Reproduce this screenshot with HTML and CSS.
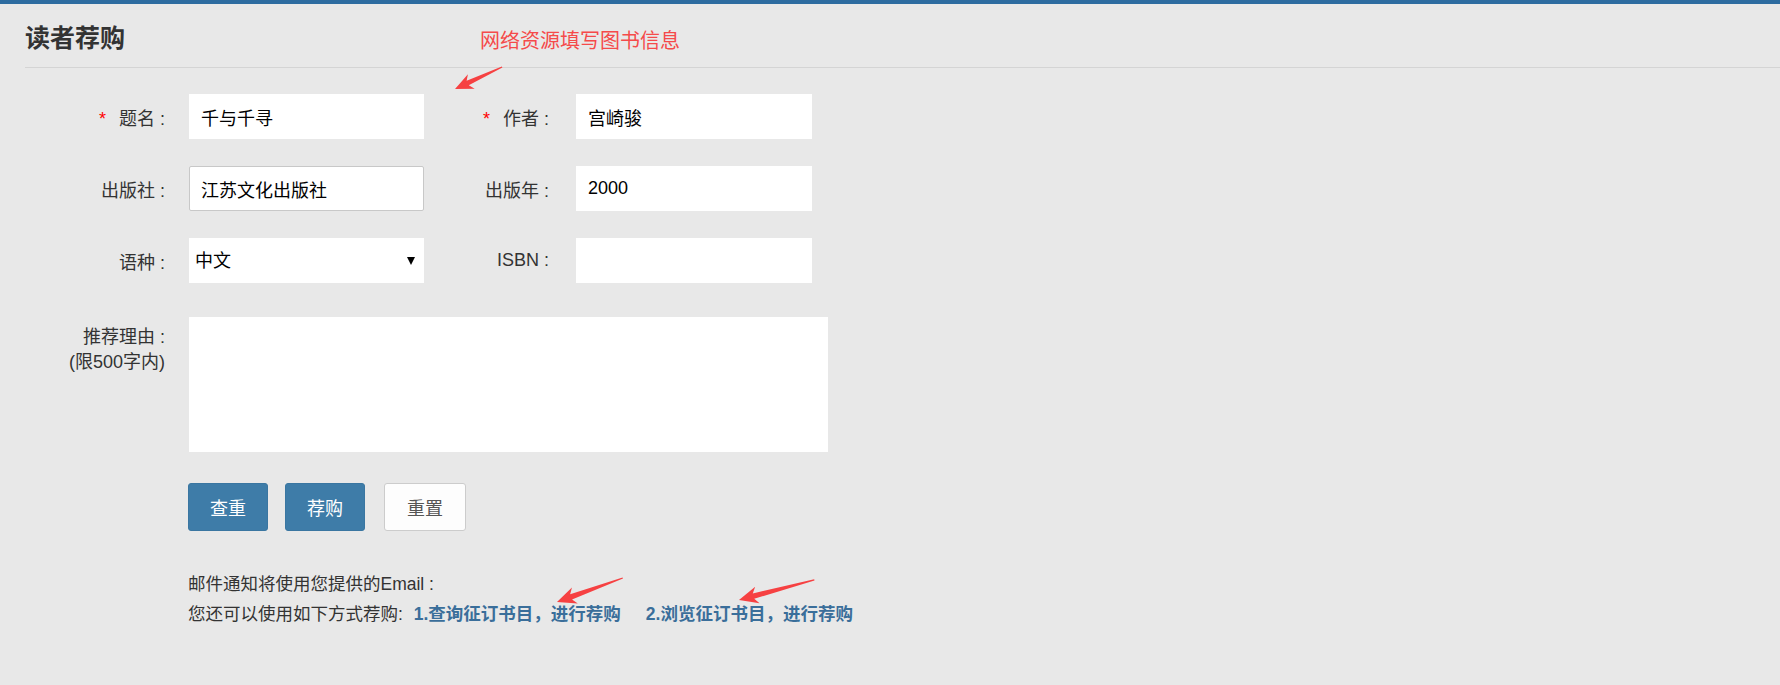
FILE: index.html
```html
<!DOCTYPE html>
<html lang="zh-CN">
<head>
    <meta charset="UTF-8">
    <title>读者荐购</title>
    <link rel="stylesheet" href="styles.css">
</head>
<body>
    <div class="topbar"></div>
    <div class="page">
        <div class="header">
            <h2>读者荐购</h2>
        </div>

        <form class="form">
            <div class="row">
                <label class="label"><span class="req">*</span>题名 :</label>
                <input class="field" type="text" value="千与千寻">
                <label class="label label-2"><span class="req">*</span>作者 :</label>
                <input class="field field-2" type="text" value="宫崎骏">
            </div>
            <div class="row">
                <label class="label">出版社 :</label>
                <input class="field focused" type="text" value="江苏文化出版社">
                <label class="label label-2">出版年 :</label>
                <input class="field field-2" type="text" value="2000">
            </div>
            <div class="row">
                <label class="label">语种 :</label>
                <div class="select-wrap">
                    <select class="field select">
                        <option>中文</option>
                        <option>英文</option>
                        <option>其他</option>
                    </select>
                </div>
                <label class="label label-2">ISBN :</label>
                <input class="field field-2" type="text">
            </div>
            <div class="row row-reason">
                <label class="label">推荐理由 :<br>(限500字内)</label>
                <textarea class="reason"></textarea>
            </div>
            <div class="buttons">
                <button type="button" class="btn btn-blue">查重</button>
                <button type="button" class="btn btn-blue">荐购</button>
                <button type="reset" class="btn btn-plain">重置</button>
            </div>
        </form>

        <div class="notes">
            <p>邮件通知将使用您提供的Email :</p>
            <p>您还可以使用如下方式荐购: <a href="#" class="link">1.查询征订书目，进行荐购</a><a href="#" class="link link-2">2.浏览征订书目，进行荐购</a></p>
        </div>
    </div>

    <!-- annotations drawn over the page -->
    <span class="note-text">网络资源填写图书信息</span>
    <svg class="arrows" width="1780" height="685" viewBox="0 0 1780 685">
        <g fill="#f64142">
            <polygon transform="translate(455 89) rotate(-25)" points="0,0 18,-8 14,-2.5 52,-0.6 52,0.6 14,2.5 18,8"/>
            <polygon transform="translate(557 602) rotate(-20)" points="0,0 19,-8.5 15,-2.8 70,-0.6 70,0.6 15,2.8 19,8.5"/>
            <polygon transform="translate(739 600) rotate(-15)" points="0,0 19,-8.5 15,-2.8 78,-0.6 78,0.6 15,2.8 19,8.5"/>
        </g>
    </svg>
</body>
</html>
```

FILE: styles.css
```css
body {
    margin: 0;
    background-color: #e8e8e8;
    font-family: "Liberation Sans", "Noto Sans CJK SC", sans-serif;
    color: #333;
    height: 685px;
    position: relative;
    overflow: hidden;
}
.topbar {
    height: 4px;
    background-color: #2d6ca0;
}
.page {
    padding-left: 25px;
}
.header {
    height: 63px;
    display: flex;
    align-items: center;
    border-bottom: 1px solid #d4d4d4;
}
.header h2 {
    margin: 0;
    font-size: 25px;
    font-weight: bold;
    color: #333;
}
.form {
    padding-top: 26px;
}
.row {
    display: flex;
    align-items: center;
    margin-bottom: 27px;
}
.label {
    width: 140px;
    margin-right: 24px;
    text-align: right;
    font-size: 18px;
    color: #333;
}
.label-2 {
    width: 125px;
    margin-right: 27px;
}
.req {
    color: #f00;
    margin-right: 13px;
}
.field {
    box-sizing: border-box;
    width: 235px;
    height: 45px;
    padding: 0 11px;
    border: 1px solid #fff;
    background-color: #fff;
    font-family: "Liberation Sans", "Noto Sans CJK SC", sans-serif;
    font-size: 18px;
    color: #000;
    outline: none;
}
.field-2 {
    width: 236px;
}
.focused {
    border-color: #c8c8c8;
    border-radius: 2px;
}
.select-wrap {
    position: relative;
}
.select {
    appearance: none;
    -webkit-appearance: none;
    padding: 0 5px;
    border-radius: 0;
}
.select-wrap::after {
    content: "";
    position: absolute;
    right: 9px;
    top: 19px;
    border-left: 4px solid transparent;
    border-right: 4px solid transparent;
    border-top: 8px solid #000;
    pointer-events: none;
}
.row-reason {
    align-items: flex-start;
    margin-top: 34px;
    margin-bottom: 0;
}
.row-reason .label {
    padding-top: 8px;
    line-height: 25px;
}
.reason {
    box-sizing: border-box;
    width: 639px;
    height: 135px;
    border: none;
    background-color: #fff;
    resize: none;
    outline: none;
}
.buttons {
    display: flex;
    gap: 17px;
    margin-top: 31px;
    padding-left: 163px;
}
.btn {
    height: 48px;
    width: 80px;
    border-radius: 3px;
    font-family: "Liberation Sans", "Noto Sans CJK SC", sans-serif;
    font-size: 18px;
    cursor: pointer;
}
.btn-blue {
    background-color: #3e7ca8;
    border: 1px solid #3a76a1;
    color: #fff;
}
.btn-plain {
    width: 82px;
    margin-left: 2px;
    background-color: #fdfdfd;
    border: 1px solid #ccc;
    color: #555;
}
.notes {
    margin-top: 38px;
    padding-left: 163px;
    font-size: 17.5px;
    line-height: 30px;
    color: #333;
}
.notes p {
    margin: 0;
}
.link {
    margin-left: 6px;
    color: #3a6e9a;
    font-weight: bold;
    text-decoration: none;
}
.link-2 {
    margin-left: 25px;
}
.note-text {
    position: absolute;
    left: 480px;
    top: 25px;
    font-size: 20px;
    color: #f54a4a;
    font-family: "Noto Sans CJK SC", sans-serif;
}
.arrows {
    position: absolute;
    left: 0;
    top: 0;
    pointer-events: none;
}
```
